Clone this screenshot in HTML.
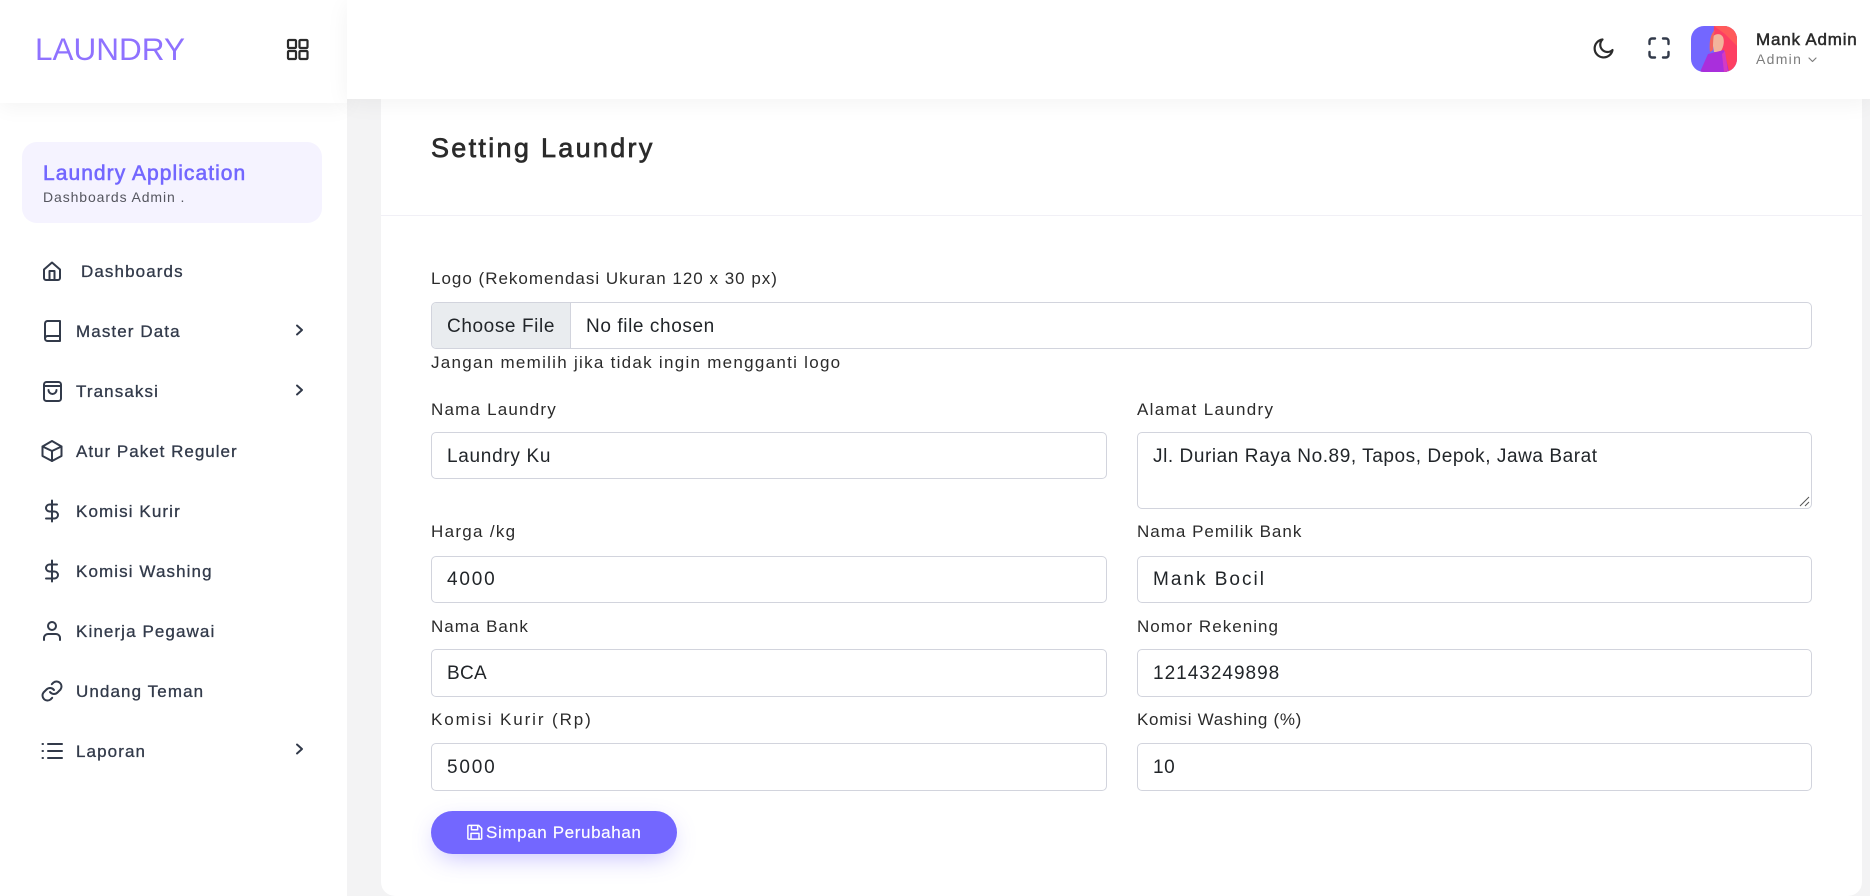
<!DOCTYPE html>
<html><head><meta charset="utf-8">
<style>
*{box-sizing:border-box}
html,body{margin:0;padding:0;width:1870px;height:896px;overflow:hidden;background:#f3f3f4;font-family:"Liberation Sans",sans-serif;color:#212529}
.a{position:absolute;white-space:nowrap}
.side{position:absolute;left:0;top:0;width:347px;height:896px;background:#fff}
.logoarea{position:absolute;left:0;top:0;width:347px;height:103px;background:#fff;box-shadow:0 4px 20px rgba(0,0,0,.05)}
.top{position:absolute;left:347px;top:0;width:1523px;height:99px;background:#fff;box-shadow:0 4px 22px rgba(0,0,0,.05)}
.card{position:absolute;left:381px;top:60px;width:1481px;height:836px;background:#fff;border-radius:14px}
.m{position:absolute;left:76px;font-size:17px;line-height:24px;letter-spacing:1.1px;color:#323a4a;-webkit-text-stroke:.3px #323a4a;white-space:nowrap}
.i{position:absolute;left:40px;width:24px;height:24px;fill:none;stroke:#323a4a;stroke-width:2;stroke-linecap:round;stroke-linejoin:round}
.ch{position:absolute;left:292px;width:14px;height:14px;fill:none;stroke:#323a4a;stroke-width:2;stroke-linecap:round;stroke-linejoin:round}
.l{position:absolute;font-size:17px;line-height:24px;letter-spacing:1.15px;color:#2b2b2b;white-space:nowrap}
.f{position:absolute;height:47px;border:1px solid #d2d4dd;border-radius:5px;background:#fff;font-size:19px;line-height:47px;padding-left:15px;letter-spacing:.6px;color:#212529;white-space:nowrap}
</style></head><body>
<div class="side"></div>
<div class="card"></div>
<div class="logoarea"></div>
<div class="top"></div>

<div class="a" style="left:35px;top:30px;font-size:31.500px;line-height:38px;color:#8f72ff;letter-spacing:0">LAUNDRY</div>
<svg class="a" style="left:285px;top:37px" width="25" height="25" viewBox="0 0 25 25" fill="none" stroke="#2b2b2b" stroke-width="2.200" stroke-linejoin="round"><rect x="3" y="3" width="8" height="8" rx="1"/><rect x="14.500" y="3" width="8" height="8" rx="1"/><rect x="3" y="14" width="8" height="8" rx="1"/><rect x="14.500" y="14" width="8" height="8" rx="1"/></svg>

<div class="a" style="left:22px;top:142px;width:300px;height:81px;background:#f5f3ff;border-radius:15px"></div>
<div class="a" style="left:43px;top:162px;font-size:21px;line-height:24px;letter-spacing:1.050px;color:#7367ff;-webkit-text-stroke:.6px #7367ff">Laundry Application</div>
<div class="a" style="left:43px;top:188px;font-size:14px;line-height:18px;letter-spacing:.9px;color:#55565f">Dashboards Admin .</div>

<svg class="i" style="top:259px" viewBox="0 0 24 24"><path d="M4 10.500 12 3.500l8 7V19a2 2 0 0 1-2 2H6a2 2 0 0 1-2-2z"/><path d="M9.500 21v-9h5v9"/></svg>
<div class="m" style="left:81px;top:260px">Dashboards</div>

<svg class="i" style="top:319px" viewBox="0 0 24 24"><path d="M5 19.500v-15A2.500 2.500 0 0 1 7.500 2H20v20H7.500A2.500 2.500 0 0 1 5 19.500 2.500 2.500 0 0 1 7.500 17H20"/></svg>
<div class="m" style="top:320px">Master Data</div>
<svg class="ch" style="top:323px" viewBox="0 0 14 14"><path d="M5 2.500 10 7 5 11.500"/></svg>

<svg class="i" style="top:379px" viewBox="0 0 24 24"><rect x="4" y="3" width="17" height="19" rx="2.500"/><path d="M4 7h17"/><path d="M8.500 11a4 4 0 0 0 8 0"/></svg>
<div class="m" style="top:380px">Transaksi</div>
<svg class="ch" style="top:383px" viewBox="0 0 14 14"><path d="M5 2.500 10 7 5 11.500"/></svg>

<svg class="i" style="top:439px" viewBox="0 0 24 24"><path d="M21.500 17V7.500L12 2 2.500 7.500V17L12 22z"/><path d="M2.500 7.500 12 12l9.500-4.500M12 12v10"/></svg>
<div class="m" style="top:440px;letter-spacing:1px">Atur Paket Reguler</div>

<svg class="i" style="top:499px" viewBox="0 0 24 24"><path d="M12 1.500v21M17 5.500H9.500a3.500 3.500 0 0 0 0 7h5a3.500 3.500 0 0 1 0 7H6"/></svg>
<div class="m" style="top:500px">Komisi Kurir</div>

<svg class="i" style="top:559px" viewBox="0 0 24 24"><path d="M12 1.500v21M17 5.500H9.500a3.500 3.500 0 0 0 0 7h5a3.500 3.500 0 0 1 0 7H6"/></svg>
<div class="m" style="top:560px">Komisi Washing</div>

<svg class="i" style="top:619px" viewBox="0 0 24 24"><circle cx="12" cy="7" r="4"/><path d="M4 21v-2a4 4 0 0 1 4-4h8a4 4 0 0 1 4 4v2"/></svg>
<div class="m" style="top:620px">Kinerja Pegawai</div>

<svg class="i" style="top:679px" viewBox="0 0 24 24"><path d="M10 13a5 5 0 0 0 7.500.5l3-3a5 5 0 0 0-7-7l-1.700 1.700"/><path d="M14 11a5 5 0 0 0-7.500-.5l-3 3a5 5 0 0 0 7 7l1.700-1.700"/></svg>
<div class="m" style="top:680px">Undang Teman</div>

<svg class="i" style="top:739px" viewBox="0 0 24 24"><path d="M8 5h14M8 12h14M8 19h14M2.500 5h.5M2.500 12h.5M2.500 19h.5"/></svg>
<div class="m" style="top:740px">Laporan</div>
<svg class="ch" style="top:742px" viewBox="0 0 14 14"><path d="M5 2.500 10 7 5 11.500"/></svg>

<svg class="a" style="left:1592px;top:36px" width="24" height="24" viewBox="0 0 24 24" fill="none" stroke="#2b2b2b" stroke-width="2.200" stroke-linecap="round" stroke-linejoin="round"><path d="M20.500 14A9 9 0 1 1 10.500 3.500 7 7 0 0 0 20.500 14z"/></svg>
<svg class="a" style="left:1647px;top:36px" width="24" height="24" viewBox="0 0 24 24" fill="none" stroke="#323a4a" stroke-width="2.400" stroke-linecap="round" stroke-linejoin="round"><path d="M8 2.500H5A2.500 2.500 0 0 0 2.500 5v3M21.500 8V5A2.500 2.500 0 0 0 19 2.500h-3M16 21.500h3a2.500 2.500 0 0 0 2.500-2.500v-3M2.500 16v3A2.500 2.500 0 0 0 5 21.500h3"/></svg>
<svg class="a" style="left:1691px;top:26px" width="46" height="46" viewBox="0 0 46 46"><defs><clipPath id="c"><rect width="46" height="46" rx="13"/></clipPath></defs><g clip-path="url(#c)"><rect width="46" height="46" fill="#7367ff"/><path d="M23 0H46V46H34L22 20z" fill="#fd3f62"/><path d="M23 0h23v20L34 8z" fill="#ff5a5a"/><path d="M21 14c0-6 8-8 11-3 2 5 0 12-3 15h-6z" fill="#f2b49c"/><path d="M24 4c-5 4-6 14-5 22l3-2c0-6 0-13 2-20z" fill="#f0645e"/><path d="M17 28 33 24l5 22H9z" fill="#a92fdc"/><path d="M31 28l3-3 3 21h-4z" fill="#d43ac4"/></g></svg>
<div class="a" style="left:1756px;top:29px;font-size:17px;line-height:22px;letter-spacing:.8px;color:#2b2b2b;-webkit-text-stroke:.5px #2b2b2b">Mank Admin</div>
<div class="a" style="left:1756px;top:50px;font-size:14px;line-height:18px;letter-spacing:1.300px;color:#7d7d7d">Admin</div>
<svg class="a" style="left:1807px;top:55px" width="11" height="9" viewBox="0 0 11 9" fill="none" stroke="#7d7d7d" stroke-width="1.200" stroke-linecap="round" stroke-linejoin="round"><path d="M2 3 5.500 6.500 9 3"/></svg>

<div class="a" style="left:431px;top:132px;font-size:27px;line-height:32px;letter-spacing:2.300px;color:#2b2b2b;-webkit-text-stroke:.7px #2b2b2b">Setting Laundry</div>
<div class="a" style="left:381px;top:215px;width:1481px;height:1px;background:#f1f0f6"></div>

<div class="l" style="left:431px;top:267px;letter-spacing:1px">Logo (Rekomendasi Ukuran 120 x 30 px)</div>
<div class="f" style="left:431px;top:302px;width:1381px;padding-left:154px;overflow:hidden">No file chosen<div style="position:absolute;left:0;top:0;width:139px;height:45px;background:#e9ecef;border-right:1px solid #d2d4dd;padding-left:15px">Choose File</div></div>
<div class="l" style="left:431px;top:351px;letter-spacing:1.280px">Jangan memilih jika tidak ingin mengganti logo</div>

<div class="l" style="left:431px;top:398px;letter-spacing:1.200px">Nama Laundry</div>
<div class="f" style="left:431px;top:432px;width:676px;letter-spacing:.7px">Laundry Ku</div>
<div class="l" style="left:1137px;top:398px;letter-spacing:1.300px">Alamat Laundry</div>
<div class="f" style="left:1137px;top:432px;width:675px;height:77px;letter-spacing:.57px">Jl. Durian Raya No.89, Tapos, Depok, Jawa Barat
<svg style="position:absolute;right:1px;bottom:1px" width="12" height="12" viewBox="0 0 12 12" fill="none" stroke="#555" stroke-width="1"><path d="M2 11 11 2M7 11l4-4"/></svg></div>

<div class="l" style="left:431px;top:520px;letter-spacing:1.300px">Harga /kg</div>
<div class="f" style="left:431px;top:556px;width:676px;line-height:45px;letter-spacing:1.800px">4000</div>
<div class="l" style="left:1137px;top:520px;letter-spacing:1px">Nama Pemilik Bank</div>
<div class="f" style="left:1137px;top:556px;width:675px;line-height:45px;letter-spacing:2px">Mank Bocil</div>

<div class="l" style="left:431px;top:615px;letter-spacing:1px">Nama Bank</div>
<div class="f" style="left:431px;top:649px;width:676px;height:48px;line-height:48px;letter-spacing:.3px">BCA</div>
<div class="l" style="left:1137px;top:615px;letter-spacing:1.030px">Nomor Rekening</div>
<div class="f" style="left:1137px;top:649px;width:675px;height:48px;line-height:48px;letter-spacing:1px">12143249898</div>

<div class="l" style="left:431px;top:708px;letter-spacing:1.900px">Komisi Kurir (Rp)</div>
<div class="f" style="left:431px;top:743px;width:676px;height:48px;line-height:48px;letter-spacing:1.800px">5000</div>
<div class="l" style="left:1137px;top:708px;letter-spacing:.7px">Komisi Washing (%)</div>
<div class="f" style="left:1137px;top:743px;width:675px;height:48px;line-height:48px">10</div>

<div class="a" style="left:431px;top:811px;width:246px;height:43px;border-radius:22px;background:#7367ff;box-shadow:0 8px 25px -6px rgba(115,103,255,.45)"></div>
<svg class="a" style="left:467px;top:824px" width="16" height="16" viewBox="0 0 18 18" fill="none" stroke="#fff" stroke-width="1.700" stroke-linejoin="round"><path d="M2 1.500h11l3.500 3.500v11a1 1 0 0 1-1 1h-13.500a1 1 0 0 1-1-1V2.500a1 1 0 0 1 1-1z"/><path d="M5 1.500v5h7v-5M4.500 17v-6.500h9V17"/></svg>
<div class="a" style="left:486px;top:821px;font-size:17px;line-height:24px;letter-spacing:.62px;color:#fff;-webkit-text-stroke:.15px #fff">Simpan Perubahan</div>
</body></html>
